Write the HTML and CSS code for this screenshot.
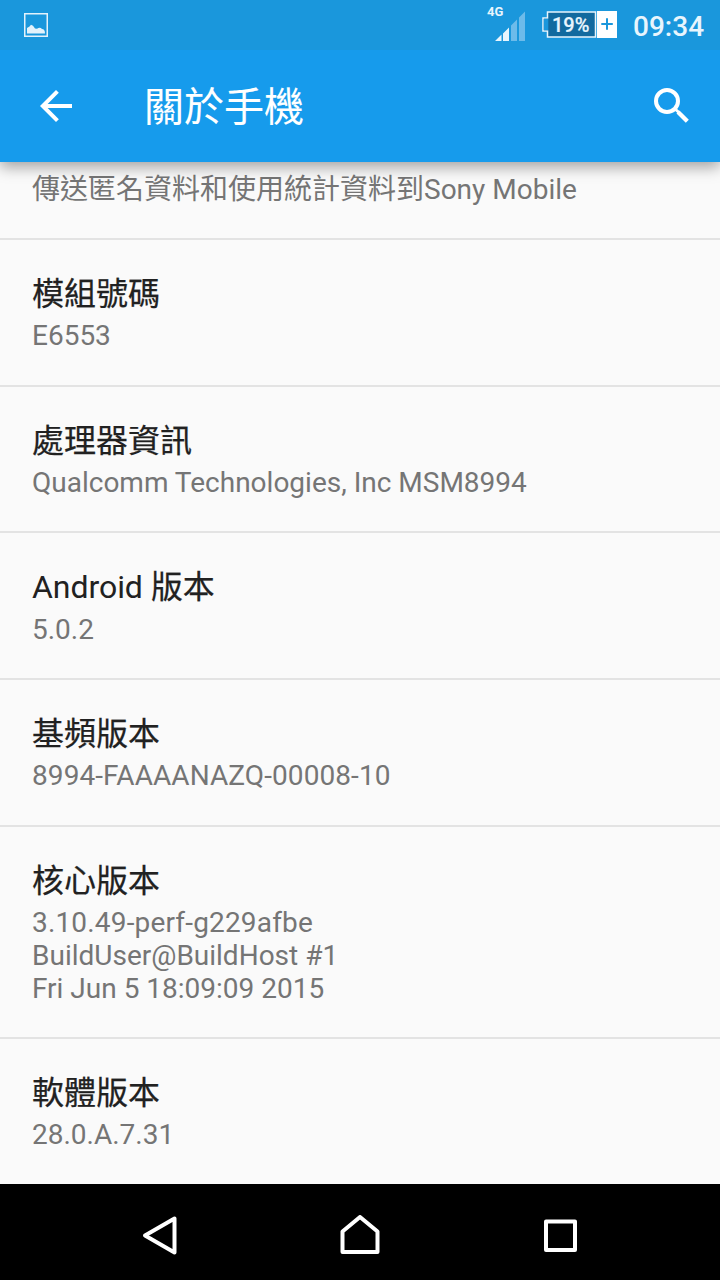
FILE: index.html
```html
<!DOCTYPE html>
<html lang="zh-TW">
<head>
<meta charset="utf-8">
<title>關於手機</title>
<link rel="stylesheet" href="styles.css">
</head>
<body>
<div class="screen">
  <div class="status">
    <svg class="picture" width="24" height="24" viewBox="0 0 24 24"><path d="M.75.75h22.5v22.5H.75z" fill="none" stroke="#e3f2fb" stroke-width="1.5"/><path d="M3 20.500v-5.500q3-1.500 4-3.200q2 0 4 3.700l2 .3q3-2 5 .2q3 0 3 4.500z" fill="#e3f2fb"/></svg>
    <div class="signal">
      <span class="network">4G</span>
      <svg width="31" height="31" viewBox="0 0 31 31"><path d="M0 30 6.500 23.500v6.500zM8 22.500l6-6V30H8z" fill="#e8f5fd"/><path d="M16 14.500l6-6V30h-6zM24 6.500l6-6V30h-6z" fill="#6dbbea"/></svg>
    </div>
    <div class="battery">
      <svg width="75" height="28" viewBox="0 0 75 28"><path d="M5.500 1h48v25h-48v-6h-4.500v-13h4.500z" fill="#126a9f" stroke="#e8f5fd" stroke-width="1.500"/><path d="M1.800 7.750h4.500v11.500H1.800z" fill="#1a97dc"/><path d="M55 0h20v27H55z" fill="#fff"/><path d="M59.300 13h11.500M65 7.200v11.600" stroke="#1a97dc" stroke-width="2"/></svg>
      <span class="level">19%</span>
    </div>
    <span class="clock">09:34</span>
  </div>
  <header class="bar">
    <svg class="back" width="32" height="32" viewBox="0 0 32 32"><path d="M32 14v4H7.660l11.180 11.180L16 32 0 16 16 0l2.820 2.820L7.660 14z" fill="#fff"/></svg>
    <h1 class="heading">關於手機</h1>
    <svg class="search" width="36" height="36" viewBox="0 0 36 36"><circle cx="13" cy="13" r="11" fill="none" stroke="#fff" stroke-width="4"/><path d="M20.500 20.500 25 24.500" stroke="#fff" stroke-width="3"/><path d="M24 24l9.300 9.300" stroke="#fff" stroke-width="4.300"/></svg>
  </header>
  <main class="list">
    <section class="row partial"><p class="value">傳送匿名資料和使用統計資料到Sony Mobile</p></section>
    <section class="row"><h2 class="name">模組號碼</h2><p class="value">E6553</p></section>
    <section class="row"><h2 class="name">處理器資訊</h2><p class="value">Qualcomm Technologies, Inc MSM8994</p></section>
    <section class="row"><h2 class="name"><span class="latin">Android </span>版本</h2><p class="value version">5.0.2</p></section>
    <section class="row"><h2 class="name">基頻版本</h2><p class="value baseband">8994-FAAAANAZQ-00008-10</p></section>
    <section class="row kernel"><h2 class="name">核心版本</h2><p class="value"><span class="release">3.10.49-perf-g229afbe</span><br>BuildUser@BuildHost #1<br>Fri Jun 5 18:09:09 2015</p></section>
    <section class="row last"><h2 class="name">軟體版本</h2><p class="value">28.0.A.7.31</p></section>
  </main>
  <nav class="keys">
    <svg width="40" height="40" viewBox="0 0 40 40"><path d="M5 20.500 34.500 3.500v34z" fill="none" stroke="#fff" stroke-width="4" stroke-linejoin="round"/></svg>
    <svg width="40" height="40" viewBox="0 0 40 40"><path d="M2.500 37V16.500L20 2l17.500 14.500V37z" fill="none" stroke="#fff" stroke-width="4" stroke-linejoin="round"/></svg>
    <svg width="40" height="40" viewBox="0 0 40 40"><path d="M6 6.500h29V35H6z" fill="none" stroke="#fff" stroke-width="4" stroke-linejoin="round"/></svg>
  </nav>
</div>
</body>
</html>
```
FILE: styles.css
```css
* { box-sizing: border-box; margin: 0; padding: 0; }
body { font-family: Roboto, "Noto Sans CJK TC", sans-serif; background: #fafafa; }
svg { display: block; }
.screen { width: 720px; height: 1280px; display: flex; flex-direction: column; overflow: hidden; }

.status { height: 50px; flex: none; display: flex; align-items: flex-start; background: #1a97dc; color: #e8f5fd; padding-left: 24px; }
.picture { margin-top: 13px; }
.signal { position: relative; margin: 11px 0 0 447px; }
.network { position: absolute; left: -8px; top: -7px; font-size: 13px; line-height: 16px; font-weight: 700; }
.battery { position: relative; margin: 11px 0 0 16px; }
.level { position: absolute; left: 10px; top: 2px; font-size: 20px; line-height: 24px; font-weight: 500; -webkit-text-stroke: .2px; }
.clock { margin: 10px 0 0 16px; font-size: 28px; line-height: 34px; font-weight: 500; }

.bar { position: relative; z-index: 1; height: 112px; flex: none; display: flex; align-items: center; background: #169bec; color: #fff; padding: 0 30px 0 40px; box-shadow: 0 5px 14px rgba(0, 0, 0, .36); clip-path: inset(0 0 -30px 0); }
.heading { margin-left: 72px; padding-top: 3px; font-size: 40px; line-height: 56px; font-weight: 400; -webkit-text-stroke: .1px; }
.search { margin-left: auto; }

.list { flex: 1; min-height: 0; overflow: hidden; background: #fafafa; }
.row { height: 146.67px; padding: 35px 32px 0; border-bottom: 2px solid #e3e3e3; }
.partial { height: 78px; padding-top: 11px; }
.kernel { height: 212px; }
.last { height: auto; border-bottom: 0; }
.name { font-size: 32px; line-height: 38px; font-weight: 400; color: #212121; margin-bottom: 6px; -webkit-text-stroke: .25px; }
.latin { -webkit-text-stroke: 0; letter-spacing: -.05px; }
.value { font-size: 28px; line-height: 33px; color: #757575; white-space: nowrap; }
.version { padding-top: .5px; }
.baseband { letter-spacing: .08px; }
.release { letter-spacing: .17px; }

.keys { height: 96px; flex: none; display: flex; justify-content: center; gap: 160px; padding-top: 31px; background: #000; }
```
